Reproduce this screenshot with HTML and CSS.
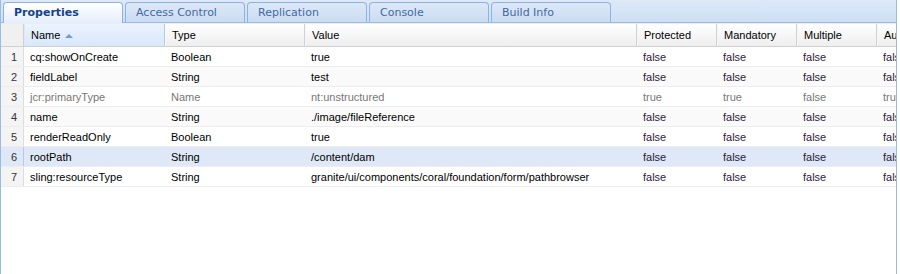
FILE: index.html
```html
<!DOCTYPE html>
<html>
<head>
  <title>CRXDE - Properties</title>
  <link rel="stylesheet" href="styles.css">
</head>
<body>
<div class="panel">
  <div class="tabstrip">
    <div class="tab active">Properties</div>
    <div class="tab">Access Control</div>
    <div class="tab">Replication</div>
    <div class="tab">Console</div>
    <div class="tab">Build Info</div>
  </div>
  <div class="gap"></div>
  <div class="grid">
    <div class="row head">
      <div class="cell num"></div>
      <div class="cell sorted">Name <span class="arrow"></span></div>
      <div class="cell">Type</div>
      <div class="cell">Value</div>
      <div class="cell">Protected</div>
      <div class="cell">Mandatory</div>
      <div class="cell">Multiple</div>
      <div class="cell">Auto Created</div>
    </div>
    <div class="row">
      <div class="cell num">1</div><div class="cell">cq:showOnCreate</div><div class="cell">Boolean</div><div class="cell">true</div>
      <div class="cell flag">false</div><div class="cell flag">false</div><div class="cell flag">false</div><div class="cell flag">false</div>
    </div>
    <div class="row alt">
      <div class="cell num">2</div><div class="cell">fieldLabel</div><div class="cell">String</div><div class="cell">test</div>
      <div class="cell flag">false</div><div class="cell flag">false</div><div class="cell flag">false</div><div class="cell flag">false</div>
    </div>
    <div class="row protected">
      <div class="cell num">3</div><div class="cell">jcr:primaryType</div><div class="cell">Name</div><div class="cell">nt:unstructured</div>
      <div class="cell">true</div><div class="cell">true</div><div class="cell">false</div><div class="cell">true</div>
    </div>
    <div class="row alt">
      <div class="cell num">4</div><div class="cell">name</div><div class="cell">String</div><div class="cell">./image/fileReference</div>
      <div class="cell flag">false</div><div class="cell flag">false</div><div class="cell flag">false</div><div class="cell flag">false</div>
    </div>
    <div class="row">
      <div class="cell num">5</div><div class="cell">renderReadOnly</div><div class="cell">Boolean</div><div class="cell">true</div>
      <div class="cell flag">false</div><div class="cell flag">false</div><div class="cell flag">false</div><div class="cell flag">false</div>
    </div>
    <div class="row selected">
      <div class="cell num">6</div><div class="cell">rootPath</div><div class="cell">String</div><div class="cell">/content/dam</div>
      <div class="cell flag">false</div><div class="cell flag">false</div><div class="cell flag">false</div><div class="cell flag">false</div>
    </div>
    <div class="row">
      <div class="cell num">7</div><div class="cell">sling:resourceType</div><div class="cell">String</div><div class="cell">granite/ui/components/coral/foundation/form/pathbrowser</div>
      <div class="cell flag">false</div><div class="cell flag">false</div><div class="cell flag">false</div><div class="cell flag">false</div>
    </div>
  </div>
</div>
</body>
</html>
```

FILE: styles.css
```css
body {
    margin: 0;
    padding: 0;
    background-color: #ffffff;
    font-family: "Liberation Sans", Arial, sans-serif;
    font-size: 11px;
}

* {
    box-sizing: border-box;
}

.panel {
    width: 897px;
    height: 274px;
    border-left: 1px solid #99bbe8;
    border-right: 1px solid #99bbe8;
    overflow: hidden;
}

.tabstrip {
    display: flex;
    gap: 2px;
    height: 23px;
    padding: 2px 0 0 2px;
    background: linear-gradient(#dde9f8, #cddff5);
    border-bottom: 1px solid #99bbe8;
}

.tab {
    flex: 0 0 120px;
    height: 20px;
    padding: 0 0 0 10px;
    line-height: 19px;
    border: 1px solid #8db2e3;
    border-bottom: none;
    border-radius: 4px 4px 0 0;
    background: linear-gradient(#dce8f7, #cbdcf2);
    color: #416aa3;
    font-family: "DejaVu Sans", Tahoma, sans-serif;
    font-size: 11px;
}

.tab.active {
    background: linear-gradient(#ffffff, #e4eefb);
    color: #15428b;
    font-weight: bold;
    height: 21px;
}

.gap {
    height: 1px;
    background-color: #e8eef8;
}

.grid {
    width: 895px;
    overflow: hidden;
}

.row {
    display: grid;
    grid-template-columns: 23px 141px 140px 332px 80px 80px 80px 80px;
    height: 20px;
    border-bottom: 1px solid #ededed;
}

.cell {
    padding: 0 0 0 6px;
    line-height: 20px;
    white-space: nowrap;
    overflow: hidden;
    color: #000000;
}

.cell.num {
    padding: 0 6px 0 0;
    text-align: right;
    color: #333333;
    background-color: #f4f4f4;
    border-right: 1px solid #dddddd;
}

.cell.flag {
    color: #2c1a3c;
}

.head {
    height: 23px;
    border-bottom: 1px solid #d0d0d0;
    background: linear-gradient(#ffffff, #eeeeee);
}

.head .cell {
    line-height: 22px;
    border-right: 1px solid #d0d0d0;
    border-left: 1px solid #f8f8f8;
}

.head .cell.num {
    background: #f0f0f0;
    border-left: none;
}

.head .cell.sorted {
    background: linear-gradient(#ebf3fd, #d9e8fb);
    border-left: 1px solid #d9e8fb;
    border-right: 1px solid #b4cbe6;
}

.arrow {
    display: inline-block;
    width: 0;
    height: 0;
    margin-left: 2px;
    vertical-align: 1px;
    border-left: 4px solid transparent;
    border-right: 4px solid transparent;
    border-bottom: 4px solid #6f9ad3;
}

.alt {
    background-color: #fafafa;
}

.protected .cell {
    color: #777777;
}

.protected .cell.num {
    color: #333333;
}

.selected {
    background-color: #dfe8f6;
}

.selected .cell.num {
    background-color: #dfe8f6;
    border-right: 1px solid #b4cbe6;
}
```
